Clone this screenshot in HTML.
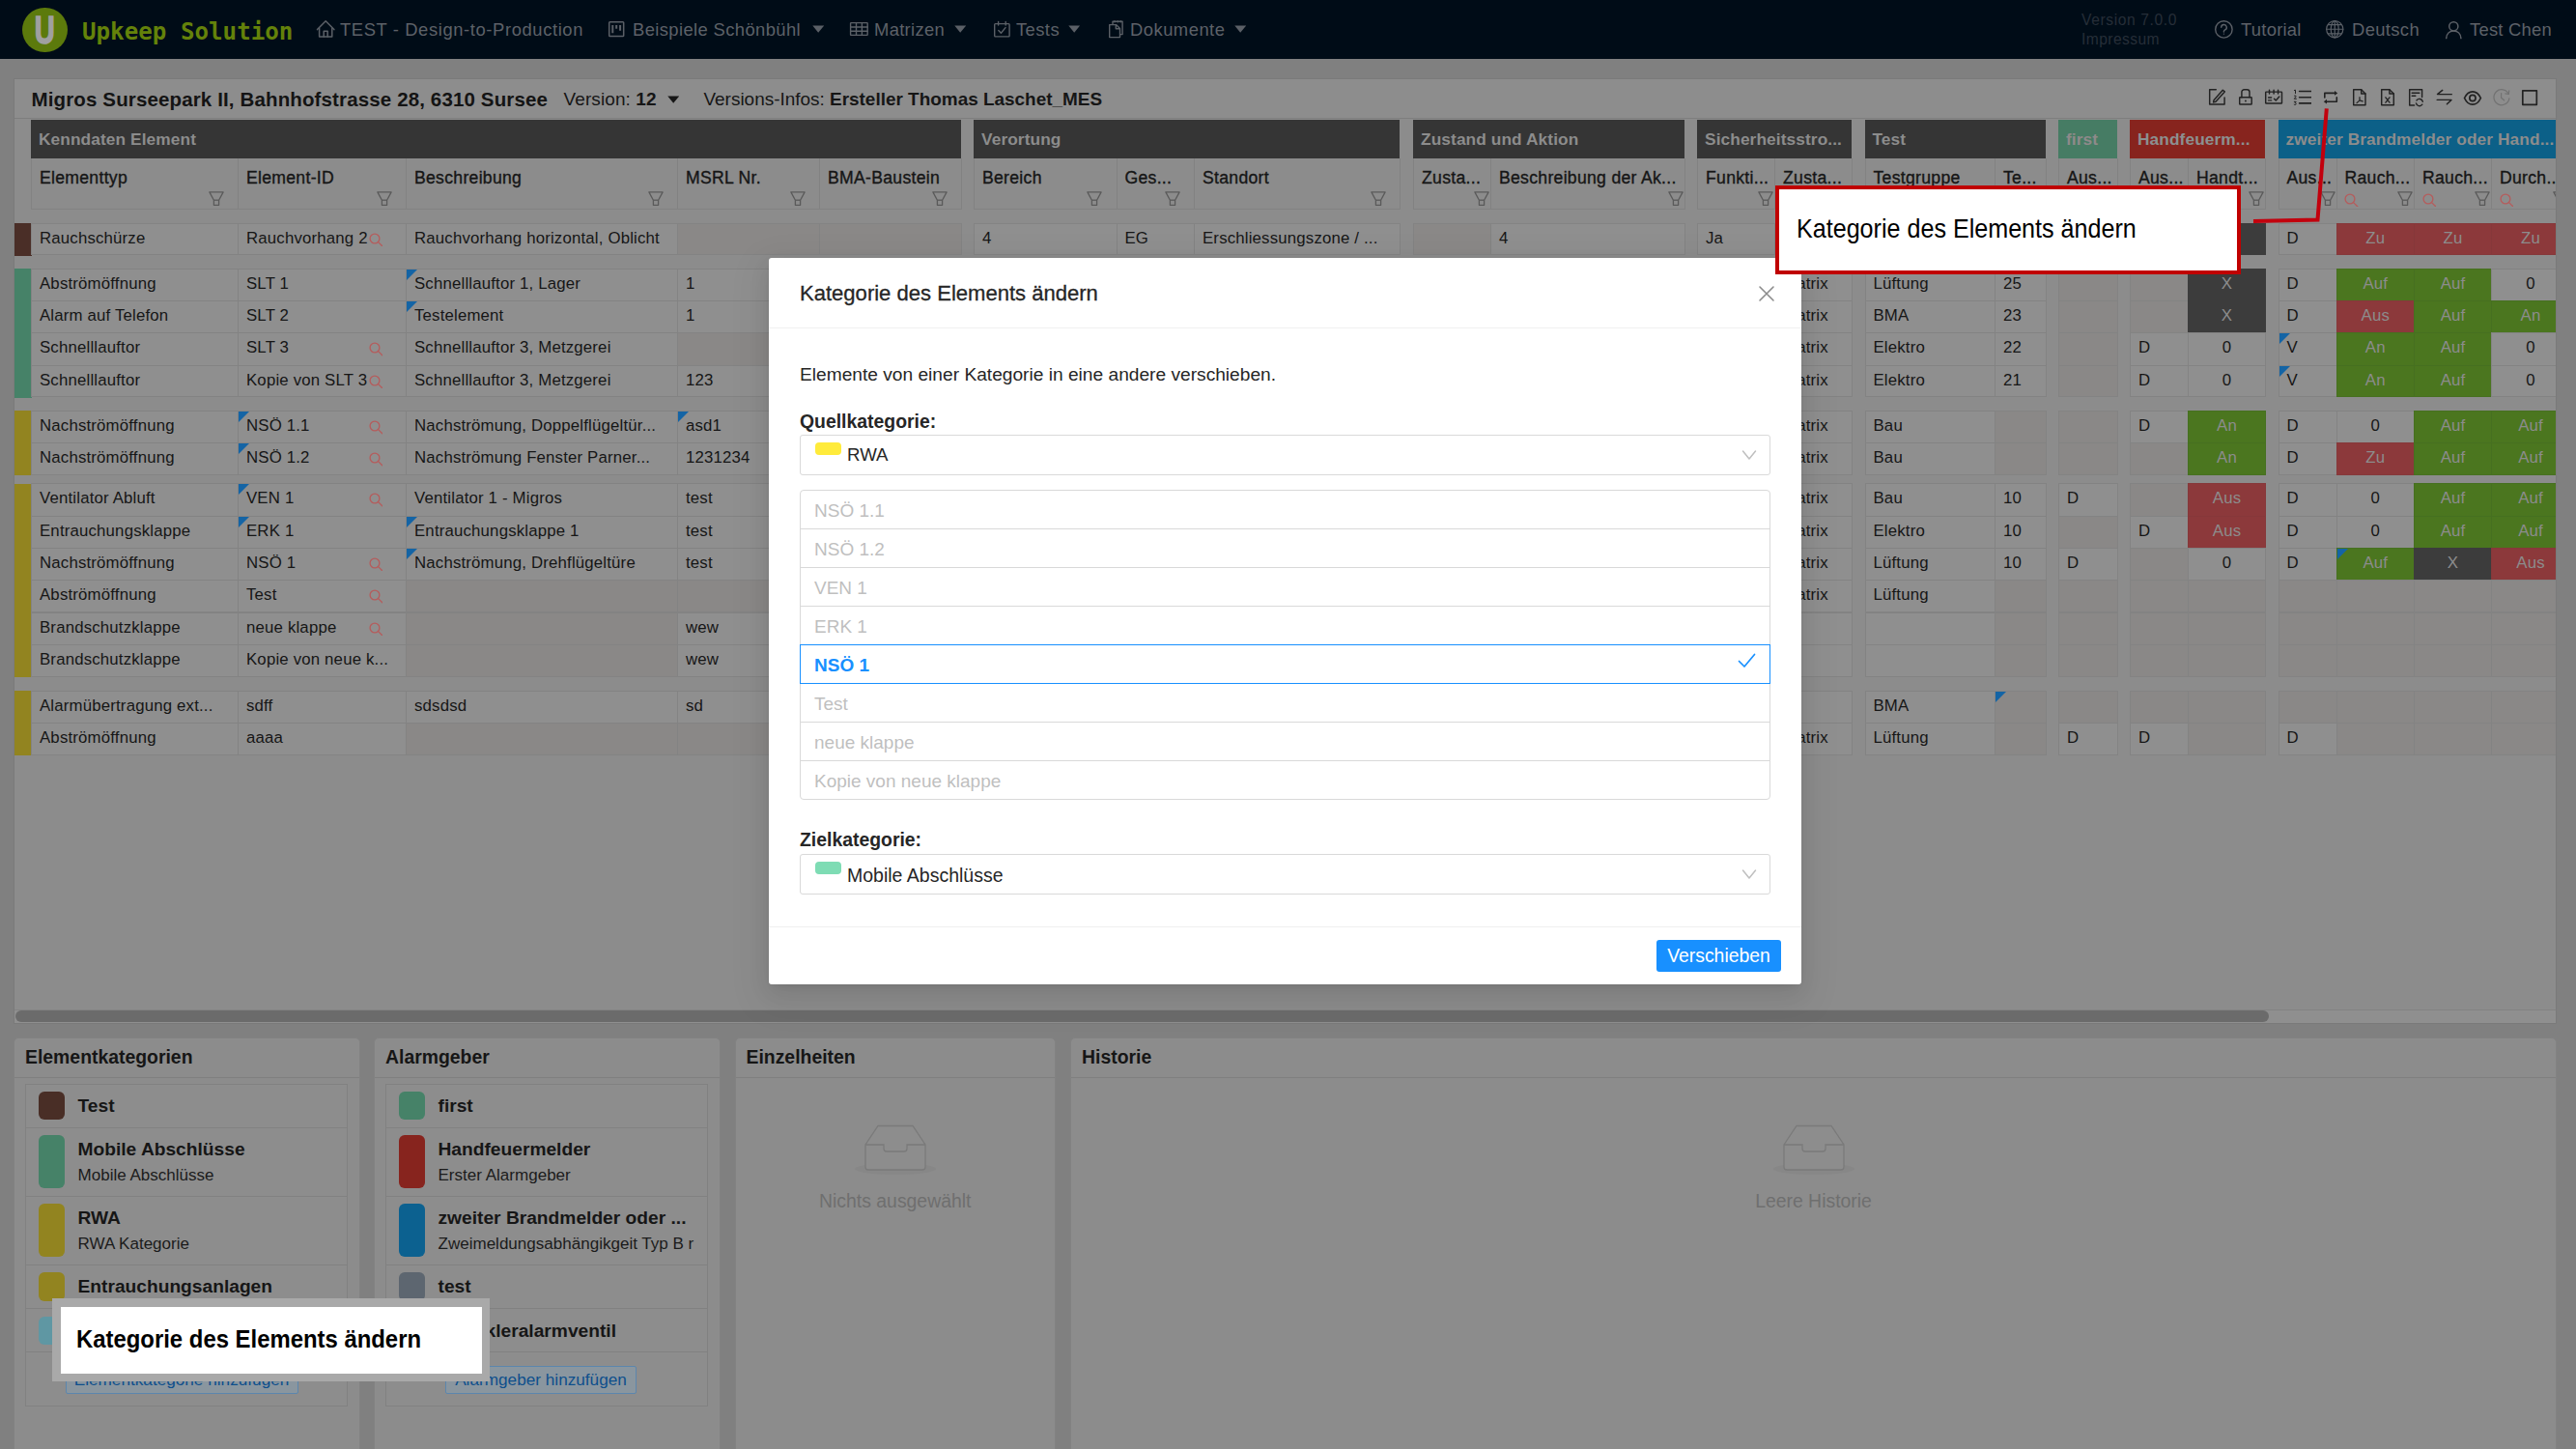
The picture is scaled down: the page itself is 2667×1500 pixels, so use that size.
<!DOCTYPE html><html lang="de"><head><meta charset="utf-8"><title>Upkeep Solution</title><style>
*{box-sizing:border-box;margin:0;padding:0}
html,body{width:2667px;height:1500px;overflow:hidden;background:#808080}
body{position:relative;font-family:"Liberation Sans",sans-serif;font-size:18.67px;color:#161616}
.abs,.c,.h,.gh,.t{position:absolute}
#nav{position:absolute;left:0;top:0;width:2667px;height:61px;background:#000c17}
.nt{position:absolute;top:-0.5px;height:61px;line-height:61px;color:#5d6168;white-space:nowrap;font-size:18.67px}
#card{position:absolute;left:14px;top:81px;width:2633px;height:979px;background:#8c8c8c;border:1px solid #7a7a7a;overflow:hidden}
.gh{top:42px;height:40px;line-height:41.4px;font-weight:bold;font-size:17.3px;letter-spacing:.1px;padding-left:8px;white-space:nowrap;overflow:hidden}
.h{top:82px;height:52.5px;border:1px solid #828282;border-top:none;background:#8c8c8c;padding:7.9px 0 0 8px;white-space:nowrap;overflow:hidden;line-height:24px;font-size:17.6px;letter-spacing:.3px;-webkit-text-stroke:0.35px #161616}
.c{height:34.3px;border:1px solid #838383;background:#8f8f8f;line-height:29.4px;font-size:16.8px;letter-spacing:.18px;padding-left:8px;white-space:nowrap;overflow:hidden}
.c.e{background:#8a8887}
.c.g{background:#4b761f;color:#8c8c8c;text-align:center;padding:0;border-color:#467020}
.c.r{background:#8c393b;color:#8c8c8c;text-align:center;padding:0;border-color:#86383a}
.c.k{background:#3c3c3c;color:#8c8c8c;text-align:center;padding:0;border-color:#3c3c3c}
.c.cc{text-align:center;padding:0}
.bar{position:absolute;left:0;width:17.5px}
.tri{position:absolute;left:0;top:0;width:0;height:0;border-top:11px solid #1464a5;border-right:11px solid transparent}
.sr{position:absolute;width:15px;height:15px}
.fl{position:absolute;width:15px;height:15px}
.panel{position:absolute;top:1073.5px;height:440px;background:#8c8c8c;border:1px solid #828282;border-radius:5px}
.ph{position:absolute;left:0;right:0;top:0;height:41.5px;border-bottom:1px solid #7f7f7f;font-weight:bold;font-size:19.4px;line-height:39.5px;padding-left:11px}
.li{position:absolute;left:10.5px;width:334px;border:1px solid #818181;background:#8d8d8d}
.sw{position:absolute;left:13px;width:27.5px;border-radius:6px}
.lt{position:absolute;left:54px;font-weight:bold;font-size:19.2px;white-space:nowrap;line-height:24px}
.ls{position:absolute;left:54px;font-size:17.05px;white-space:nowrap;line-height:20px;color:#1b1b1b}
.btn{position:absolute;height:29px;border:1px solid #5c86ad;background:#8a969f;color:#0e4f8c;border-radius:2px;font-size:17.2px;line-height:26px;text-align:center;white-space:nowrap}
#modal{position:absolute;left:796px;top:267px;width:1069px;height:752px;background:#fff;border-radius:3px;box-shadow:0 4px 8px -5px rgba(0,0,0,.12),0 8px 21px 0 rgba(0,0,0,.08),0 12px 37px 11px rgba(0,0,0,.05);color:#262626}
.sel{position:absolute;left:32px;width:1005px;height:42px;border:1px solid #d9d9d9;border-radius:3px;background:#fff}
.opt{position:absolute;left:0;width:1005px;height:41px;border:1px solid #d9d9d9;color:#bfbfbf;line-height:41.5px;font-size:19px;padding-left:14px;background:#fff}
</style></head><body>
<div id="nav">
<div class="abs" style="left:23px;top:7.5px;width:46.5px;height:46.5px;border-radius:50%;background:#5c7a0c"></div>
<div class="abs" style="left:23px;top:7.5px;width:46.5px;height:46.5px;color:#a0a0a0;-webkit-text-stroke:1.6px #a0a0a0;font-weight:bold;font-size:41.5px;line-height:45.5px;text-align:center;transform:scaleX(0.70)">U</div>
<div class="abs" style="left:85px;top:2.5px;height:61px;line-height:61px;font-family:'DejaVu Sans Mono','Liberation Mono',monospace;font-weight:bold;font-size:24.2px;color:#64820a;white-space:nowrap">Upkeep Solution</div>
<svg class="abs" style="left:326.7px;top:20.2px" width="20.4" height="19.7" viewBox="-1 -1 20.4 19.7" fill="none" stroke="#5b6067" stroke-width="1.5" stroke-linecap="round" stroke-linejoin="round"><path d="M0.500 9.600 9.200 0.700 17.900 9.600"/><path d="M2.600 8.200V17H15.800V8.200"/><path d="M7.200 17V11.200H11.200V17"/></svg>
<div class="nt" style="left:352px;font-size:18.4px;letter-spacing:0.601px;">TEST - Design-to-Production</div>
<svg class="abs" style="left:628.5px;top:21.2px" width="18.4" height="18.2" viewBox="-1 -1 18.4 18.2" fill="none" stroke="#5b6067" stroke-width="1.5" stroke-linecap="round" stroke-linejoin="round"><rect x="0.700" y="0.700" width="15" height="14.800" rx="0.800"/><path d="M4.300 4v8.200M8.200 4v3.800M12.100 4v5.800" stroke-width="2" stroke-linecap="butt"/></svg>
<div class="nt" style="left:655px;font-size:18.4px;letter-spacing:0.387px;">Beispiele Schönbühl</div>
<svg class="abs" style="left:840.5px;top:26.2px" width="12.4" height="8" viewBox="0 0 12.4 8"><path d="M0.3 0.6h11.800L6.200 7.800z" fill="#5b6067"/></svg>
<svg class="abs" style="left:878.6px;top:22.3px" width="20.8" height="16.0" viewBox="-1 -1 20.8 16.0" fill="none" stroke="#5b6067" stroke-width="1.4" stroke-linecap="round" stroke-linejoin="round"><rect x="0.600" y="0.600" width="17.600" height="12.800" rx="0.600"/><path d="M0.600 5h17.600M0.600 9.300h17.600M6.500 0.600v12.800M12.400 0.600v12.800"/></svg>
<div class="nt" style="left:905px;font-size:18.4px;letter-spacing:0.309px;">Matrizen</div>
<svg class="abs" style="left:988px;top:26.2px" width="12.4" height="8" viewBox="0 0 12.4 8"><path d="M0.3 0.6h11.800L6.200 7.800z" fill="#5b6067"/></svg>
<svg class="abs" style="left:1028.0px;top:20.6px" width="18.8" height="18.6" viewBox="-1 -1 18.8 18.6" fill="none" stroke="#5b6067" stroke-width="1.4" stroke-linecap="round" stroke-linejoin="round"><rect x="0.700" y="2.600" width="15.400" height="13.300" rx="0.800"/><path d="M4.600 0.500v3.600M12.200 0.500v3.600M4.800 9.600l2.600 2.600 4.600-5.600"/></svg>
<div class="nt" style="left:1052px;font-size:18.4px;letter-spacing:0.412px;">Tests</div>
<svg class="abs" style="left:1106.3px;top:26.2px" width="12.4" height="8" viewBox="0 0 12.4 8"><path d="M0.3 0.6h11.800L6.200 7.800z" fill="#5b6067"/></svg>
<svg class="abs" style="left:1146.8px;top:20.1px" width="16.8" height="20.3" viewBox="-1 -1 16.8 20.3" fill="none" stroke="#5b6067" stroke-width="1.4" stroke-linecap="round" stroke-linejoin="round"><path d="M4 3.400V1.300h10.100V14.600H11.600"/><path d="M6 0.400v1.800M9.200 0.400v1.800M12.200 0.400v1.800" stroke-width="1"/><path d="M0.700 4.600h6.800l4 4v9H0.700z"/><path d="M7.300 4.800v4h4"/></svg>
<div class="nt" style="left:1170px;font-size:18.4px;letter-spacing:0.484px;">Dokumente</div>
<svg class="abs" style="left:1277.5px;top:26.2px" width="12.4" height="8" viewBox="0 0 12.4 8"><path d="M0.3 0.6h11.800L6.200 7.800z" fill="#5b6067"/></svg>
<div class="abs" style="left:2155px;top:11px;font-size:15.6px;letter-spacing:0.613px;line-height:20px;color:#262e38;white-space:nowrap">Version 7.0.0</div>
<div class="abs" style="left:2155px;top:31px;font-size:15.6px;letter-spacing:0.431px;line-height:20px;color:#262e38;white-space:nowrap">Impressum</div>
<svg class="abs" style="left:2292.0px;top:20.2px" width="20.8" height="20.8" viewBox="-1 -1 20.8 20.8" fill="none" stroke="#5b6067" stroke-width="1.4" stroke-linecap="round" stroke-linejoin="round"><circle cx="9.400" cy="9.400" r="8.700"/><path d="M6.700 7.300a2.800 2.800 0 1 1 3.900 2.600c-.8.400-1.200.9-1.200 1.700v.4"/><circle cx="9.400" cy="14.100" r=".7" fill="#5f646b" stroke="none"/></svg>
<div class="nt" style="left:2320px;font-size:18.4px;letter-spacing:0.257px;">Tutorial</div>
<svg class="abs" style="left:2406.9px;top:20.3px" width="20.5" height="20.5" viewBox="-1 -1 20.5 20.5" fill="none" stroke="#5b6067" stroke-width="1.2" stroke-linecap="round" stroke-linejoin="round"><circle cx="9.250" cy="9.250" r="8.600"/><ellipse cx="9.250" cy="9.250" rx="4" ry="8.600"/><path d="M0.700 9.250h17.100M2.300 4.600h13.900M2.300 13.900h13.900M9.250 0.700v17.100"/></svg>
<div class="nt" style="left:2435px;font-size:18.4px;letter-spacing:0.362px;">Deutsch</div>
<svg class="abs" style="left:2531.0px;top:20.5px" width="18.6" height="20.0" viewBox="-1 -1 18.6 20.0" fill="none" stroke="#5b6067" stroke-width="1.5" stroke-linecap="round" stroke-linejoin="round"><circle cx="8.300" cy="5.300" r="4.600"/><path d="M0.700 17.600c.3-4.600 3.400-7.600 7.600-7.600s7.300 3 7.600 7.600"/></svg>
<div class="nt" style="left:2557px;font-size:18.4px;letter-spacing:0.243px;">Test Chen</div>
</div>
<div id="card">
<div class="abs" style="left:0;top:0;width:2633px;height:41px;border-bottom:1px solid #7e7e7e;background:#8d8d8d"></div>
<div class="abs" style="left:17.5px;top:5.799999999999997px;font-weight:bold;font-size:20.5px;letter-spacing:0.134px;line-height:30px;white-space:nowrap;color:#141414" id="ttl">Migros Surseepark II, Bahnhofstrasse 28, 6310 Sursee</div>
<div class="abs" style="left:568.5px;top:6.400000000000006px;line-height:30px;white-space:nowrap;font-size:19px;letter-spacing:.1px" id="ver">Version: <b>12</b></div>
<svg class="abs" style="left:675.5px;top:16.5px" width="12.4" height="8" viewBox="0 0 12.4 8"><path d="M0.3 0.6h11.800L6.200 7.800z" fill="#161616"/></svg>
<div class="abs" style="left:713.5px;top:6.400000000000006px;line-height:30px;white-space:nowrap;font-size:18.95px" id="vinfo">Versions-Infos: <b>Ersteller Thomas Laschet_MES</b></div>
<svg class="abs" style="left:2271.3px;top:9.3px" width="18.8" height="18.8" viewBox="-1 -1 18.8 18.8" fill="none" stroke="#222222" stroke-width="1.45" stroke-linecap="round" stroke-linejoin="round"><path d="M7.300 0.700H0.700V16.100H16.100V9.100"/><path d="M5 11.800 14.300 1.200 16.300 2.900 7 13.300 4.600 13.900Z"/></svg>
<svg class="abs" style="left:2302.1px;top:9.3px" width="15.9" height="18.8" viewBox="-1 -1 15.9 18.8" fill="none" stroke="#222222" stroke-width="1.45" stroke-linecap="round" stroke-linejoin="round"><rect x="0.700" y="8.700" width="12.500" height="7.400" rx="0.600"/><path d="M2.900 8.700V3.400a2.600 2.600 0 0 1 2.600-2.600h2.900a2.600 2.600 0 0 1 2.600 2.600V8.700"/><circle cx="6.950" cy="12.500" r="0.900" fill="#222" stroke="none"/></svg>
<svg class="abs" style="left:2329.3px;top:10.4px" width="20.2" height="16.6" viewBox="-1 -1 20.2 16.6" fill="none" stroke="#222222" stroke-width="1.45" stroke-linecap="round" stroke-linejoin="round"><rect x="0.700" y="2.100" width="16.800" height="11.900" rx="0.600"/><path d="M4.500 0.200v3.800M9.100 0.200v3.800M13.600 0.200v3.800M3.600 8.100h3M3.600 10.900h3M9.500 9.200l1.800 1.900 3.500-4"/></svg>
<svg class="abs" style="left:2358.7px;top:10.4px" width="19.8" height="17.4" viewBox="-1 -1 19.8 17.4" fill="none" stroke="#222222" stroke-width="1.45" stroke-linecap="round" stroke-linejoin="round"><path d="M5.600 1.500h12.200M5.600 7.700h12.200M5.600 13.900h12.200" stroke-width="1.600"/><path d="M0.400 0.500 1.500 0.200V3.600M0.300 6.300c0.800-0.700 2.100-0.300 1.800 0.700L0.300 9.300H2.400M0.300 12.300H2.200L1.100 13.600c1.300-0.100 1.500 1.600 0.400 1.900-0.500 0.100-0.900 0-1.300-0.300" stroke-width="1"/></svg>
<svg class="abs" style="left:2390.1px;top:11.1px" width="16.0" height="15.6" viewBox="-1 -1 16.0 15.6" fill="none" stroke="#222222" stroke-width="1.6" stroke-linecap="round" stroke-linejoin="round"><path d="M0.800 6.900V2.400H11.600"/><path d="M11 0V4.800L14.200 2.400Z" fill="#222" stroke="none"/><path d="M13.300 6.900V11.200H2.500"/><path d="M3 8.800V13.600L-0.200 11.200Z" fill="#222" stroke="none"/></svg>
<svg class="abs" style="left:2419.8px;top:9.0px" width="15.7" height="19.5" viewBox="-1 -1 15.7 19.5" fill="none" stroke="#222222" stroke-width="1.45" stroke-linecap="round" stroke-linejoin="round"><path d="M0.700 0.700H8.700L13 5V16.800H0.700Z"/><path d="M8.700 0.700V5H13" /><path d="M7 11.900V8.600M7 11.900 4 14.600M7 11.900 10.200 12.900" stroke-width="1.200"/></svg>
<svg class="abs" style="left:2449.1px;top:9.0px" width="16.0" height="19.5" viewBox="-1 -1 16.0 19.5" fill="none" stroke="#222222" stroke-width="1.45" stroke-linecap="round" stroke-linejoin="round"><path d="M0.700 0.700H8.900L13.300 5V16.800H0.700Z"/><path d="M8.900 0.700V5H13.300"/><path d="M4.900 8.800 9 14.200M9 8.800 4.900 14.200" stroke-width="1.300"/></svg>
<svg class="abs" style="left:2478.1px;top:9.0px" width="17.1" height="19.8" viewBox="-1 -1 17.1 19.8" fill="none" stroke="#222222" stroke-width="1.45" stroke-linecap="round" stroke-linejoin="round"><path d="M5.600 17.100H0.700V0.700H13.600V8.600"/><path d="M3.200 4.200H10.800M3.200 7.300H6.800"/><path d="M14.300 13.200a3.500 3.500 0 0 0-6.300-1.300M7.500 14.900a3.500 3.500 0 0 0 6.300 1.300" /></svg>
<svg class="abs" style="left:2507.1px;top:10.4px" width="17.4" height="17.0" viewBox="-1 -1 17.4 17.0" fill="none" stroke="#222222" stroke-width="1.45" stroke-linecap="round" stroke-linejoin="round"><path d="M15.300 4.600H0.500L5.700 0.400"/><path d="M0.200 10.400H15L10.400 14.700"/></svg>
<svg class="abs" style="left:2535.4px;top:11.1px" width="19.9" height="17.0" viewBox="-1 -1 19.9 17.0" fill="none" stroke="#222222" stroke-width="1.7" stroke-linecap="round" stroke-linejoin="round"><path d="M0.500 7.500C2.500 3.200 5.600 0.800 8.950 0.800S15.400 3.200 17.400 7.500C15.400 11.800 12.300 14.200 8.950 14.200S2.500 11.800 0.500 7.500Z"/><circle cx="8.950" cy="7.500" r="3.100"/></svg>
<svg class="abs" style="left:2565.1px;top:9.0px" width="19.2" height="19.5" viewBox="-1 -1 19.2 19.5" fill="none" stroke="#727272" stroke-width="1.2" stroke-linecap="round" stroke-linejoin="round"><path d="M16.200 5.300A8 8 0 1 0 16.900 9.800"/><path d="M8.600 4.600V9.200L11.600 11.800M16.700 1.800 16.400 5.500 12.900 4.800" /></svg>
<svg class="abs" style="left:2595.2px;top:10.0px" width="18.1" height="18.1" viewBox="-1 -1 18.1 18.1" fill="none" stroke="#222222" stroke-width="1.7" stroke-linecap="round" stroke-linejoin="round"><rect x="0.800" y="0.800" width="14.500" height="14.500"/></svg>
<div class="gh" style="left:17.0px;width:963.0px;background:#353535;color:#8c8c8c">Kenndaten Element</div>
<div class="h" style="left:17.0px;width:215.0px">Elementtyp</div>
<svg class="abs" style="left:200.5px;top:116.19999999999999px" width="16" height="15" viewBox="0 0 16 15" fill="none" stroke="#5a5a5a" stroke-width="1.3" stroke-linejoin="round"><path d="M0.900 0.900H15.100L10.600 9.200V14.300H5.400V9.200Z"/><path d="M5.400 9.200H10.600"/></svg>
<div class="h" style="left:231.0px;width:175.0px">Element-ID</div>
<svg class="abs" style="left:374.5px;top:116.19999999999999px" width="16" height="15" viewBox="0 0 16 15" fill="none" stroke="#5a5a5a" stroke-width="1.3" stroke-linejoin="round"><path d="M0.900 0.900H15.100L10.600 9.200V14.300H5.400V9.200Z"/><path d="M5.400 9.200H10.600"/></svg>
<div class="h" style="left:405.0px;width:282.0px">Beschreibung</div>
<svg class="abs" style="left:655.5px;top:116.19999999999999px" width="16" height="15" viewBox="0 0 16 15" fill="none" stroke="#5a5a5a" stroke-width="1.3" stroke-linejoin="round"><path d="M0.900 0.900H15.100L10.600 9.200V14.300H5.400V9.200Z"/><path d="M5.400 9.200H10.600"/></svg>
<div class="h" style="left:686.0px;width:148.0px">MSRL Nr.</div>
<svg class="abs" style="left:802.5px;top:116.19999999999999px" width="16" height="15" viewBox="0 0 16 15" fill="none" stroke="#5a5a5a" stroke-width="1.3" stroke-linejoin="round"><path d="M0.900 0.900H15.100L10.600 9.200V14.300H5.400V9.200Z"/><path d="M5.400 9.200H10.600"/></svg>
<div class="h" style="left:833.0px;width:148.0px">BMA-Baustein</div>
<svg class="abs" style="left:949.5px;top:116.19999999999999px" width="16" height="15" viewBox="0 0 16 15" fill="none" stroke="#5a5a5a" stroke-width="1.3" stroke-linejoin="round"><path d="M0.900 0.900H15.100L10.600 9.200V14.300H5.400V9.200Z"/><path d="M5.400 9.200H10.600"/></svg>
<div class="gh" style="left:993.0px;width:441.0px;background:#353535;color:#8c8c8c">Verortung</div>
<div class="h" style="left:993.0px;width:148.5px">Bereich</div>
<svg class="abs" style="left:1110.0px;top:116.19999999999999px" width="16" height="15" viewBox="0 0 16 15" fill="none" stroke="#5a5a5a" stroke-width="1.3" stroke-linejoin="round"><path d="M0.900 0.900H15.100L10.600 9.200V14.300H5.400V9.200Z"/><path d="M5.400 9.200H10.600"/></svg>
<div class="h" style="left:1140.5px;width:81.5px">Ges...</div>
<svg class="abs" style="left:1190.5px;top:116.19999999999999px" width="16" height="15" viewBox="0 0 16 15" fill="none" stroke="#5a5a5a" stroke-width="1.3" stroke-linejoin="round"><path d="M0.900 0.900H15.100L10.600 9.200V14.300H5.400V9.200Z"/><path d="M5.400 9.200H10.600"/></svg>
<div class="h" style="left:1221.0px;width:214.0px">Standort</div>
<svg class="abs" style="left:1403.5px;top:116.19999999999999px" width="16" height="15" viewBox="0 0 16 15" fill="none" stroke="#5a5a5a" stroke-width="1.3" stroke-linejoin="round"><path d="M0.900 0.900H15.100L10.600 9.200V14.300H5.400V9.200Z"/><path d="M5.400 9.200H10.600"/></svg>
<div class="gh" style="left:1448.0px;width:281.0px;background:#353535;color:#8c8c8c">Zustand und Aktion</div>
<div class="h" style="left:1448.0px;width:81.0px">Zusta...</div>
<svg class="abs" style="left:1511px;top:116.19999999999999px" width="16" height="15" viewBox="0 0 16 15" fill="none" stroke="#5a5a5a" stroke-width="1.3" stroke-linejoin="round"><path d="M0.900 0.900H15.100L10.600 9.200V14.300H5.400V9.200Z"/><path d="M5.400 9.200H10.600"/></svg>
<div class="h" style="left:1528.0px;width:202.0px">Beschreibung der Ak...</div>
<svg class="abs" style="left:1712px;top:116.19999999999999px" width="16" height="15" viewBox="0 0 16 15" fill="none" stroke="#5a5a5a" stroke-width="1.3" stroke-linejoin="round"><path d="M0.900 0.900H15.100L10.600 9.200V14.300H5.400V9.200Z"/><path d="M5.400 9.200H10.600"/></svg>
<div class="gh" style="left:1742.0px;width:160.0px;background:#353535;color:#8c8c8c">Sicherheitsstro...</div>
<div class="h" style="left:1742.0px;width:81.0px">Funkti...</div>
<svg class="abs" style="left:1805px;top:116.19999999999999px" width="16" height="15" viewBox="0 0 16 15" fill="none" stroke="#5a5a5a" stroke-width="1.3" stroke-linejoin="round"><path d="M0.900 0.900H15.100L10.600 9.200V14.300H5.400V9.200Z"/><path d="M5.400 9.200H10.600"/></svg>
<div class="h" style="left:1822.0px;width:81.0px">Zusta...</div>
<svg class="abs" style="left:1885px;top:116.19999999999999px" width="16" height="15" viewBox="0 0 16 15" fill="none" stroke="#5a5a5a" stroke-width="1.3" stroke-linejoin="round"><path d="M0.900 0.900H15.100L10.600 9.200V14.300H5.400V9.200Z"/><path d="M5.400 9.200H10.600"/></svg>
<div class="gh" style="left:1915.5px;width:187.5px;background:#353535;color:#8c8c8c">Test</div>
<div class="h" style="left:1915.5px;width:135.5px">Testgruppe</div>
<div class="h" style="left:2050.0px;width:54.0px">Te...</div>
<div class="gh" style="left:2116.0px;width:61.0px;background:#467c64;color:#8e8a8a">first</div>
<div class="h" style="left:2116.0px;width:62.0px">Aus...</div>
<div class="gh" style="left:2190.0px;width:140.0px;background:#87241e;color:#8c9090">Handfeuerm...</div>
<div class="h" style="left:2190.0px;width:61.0px">Aus...</div>
<div class="h" style="left:2250.0px;width:81.0px">Handt...</div>
<svg class="abs" style="left:2313px;top:116.19999999999999px" width="16" height="15" viewBox="0 0 16 15" fill="none" stroke="#5a5a5a" stroke-width="1.3" stroke-linejoin="round"><path d="M0.900 0.900H15.100L10.600 9.200V14.300H5.400V9.200Z"/><path d="M5.400 9.200H10.600"/></svg>
<div class="gh" style="left:2343.5px;width:301.5px;background:#0c6088;color:#8c8c8c">zweiter Brandmelder oder Hand...</div>
<div class="h" style="left:2343.5px;width:61.0px">Aus...</div>
<svg class="abs" style="left:2386.5px;top:116.19999999999999px" width="16" height="15" viewBox="0 0 16 15" fill="none" stroke="#5a5a5a" stroke-width="1.3" stroke-linejoin="round"><path d="M0.900 0.900H15.100L10.600 9.200V14.300H5.400V9.200Z"/><path d="M5.400 9.200H10.600"/></svg>
<div class="h" style="left:2403.5px;width:81.5px">Rauch...</div>
<svg class="abs" style="left:2467px;top:116.19999999999999px" width="16" height="15" viewBox="0 0 16 15" fill="none" stroke="#5a5a5a" stroke-width="1.3" stroke-linejoin="round"><path d="M0.900 0.900H15.100L10.600 9.200V14.300H5.400V9.200Z"/><path d="M5.400 9.200H10.600"/></svg>
<svg class="abs" style="left:2412.0px;top:117.5px" width="14.500" height="14.500" viewBox="0 0 16 16" fill="none" stroke="#b55c5c" stroke-width="1.500" stroke-linecap="round"><circle cx="6.600" cy="6.600" r="5.400"/><path d="M10.600 10.600 15.200 15.200"/></svg>
<div class="h" style="left:2484.0px;width:81.0px">Rauch...</div>
<svg class="abs" style="left:2547px;top:116.19999999999999px" width="16" height="15" viewBox="0 0 16 15" fill="none" stroke="#5a5a5a" stroke-width="1.3" stroke-linejoin="round"><path d="M0.900 0.900H15.100L10.600 9.200V14.300H5.400V9.200Z"/><path d="M5.400 9.200H10.600"/></svg>
<svg class="abs" style="left:2492.5px;top:117.5px" width="14.500" height="14.500" viewBox="0 0 16 16" fill="none" stroke="#b55c5c" stroke-width="1.500" stroke-linecap="round"><circle cx="6.600" cy="6.600" r="5.400"/><path d="M10.600 10.600 15.200 15.200"/></svg>
<div class="h" style="left:2564.0px;width:82.0px">Durch...</div>
<svg class="abs" style="left:2628px;top:116.19999999999999px" width="16" height="15" viewBox="0 0 16 15" fill="none" stroke="#5a5a5a" stroke-width="1.3" stroke-linejoin="round"><path d="M0.900 0.900H15.100L10.600 9.200V14.300H5.400V9.200Z"/><path d="M5.400 9.200H10.600"/></svg>
<svg class="abs" style="left:2572.5px;top:117.5px" width="14.500" height="14.500" viewBox="0 0 16 16" fill="none" stroke="#b55c5c" stroke-width="1.500" stroke-linecap="round"><circle cx="6.600" cy="6.600" r="5.400"/><path d="M10.600 10.600 15.200 15.200"/></svg>
<div class="bar" style="top:148.8px;height:33.9px;background:#4a2e27"></div>
<div class="c" style="left:17.0px;top:148.6px;width:215.0px;height:33.8px">Rauchschürze</div>
<div class="c" style="left:231.0px;top:148.6px;width:175.0px;height:33.8px">Rauchvorhang 2</div>
<svg class="abs" style="left:366.5px;top:158.6px" width="14.500" height="14.500" viewBox="0 0 16 16" fill="none" stroke="#b55c5c" stroke-width="1.500" stroke-linecap="round"><circle cx="6.600" cy="6.600" r="5.400"/><path d="M10.600 10.600 15.200 15.200"/></svg>
<div class="c" style="left:405.0px;top:148.6px;width:282.0px;height:33.8px">Rauchvorhang horizontal, Oblicht</div>
<div class="c e" style="left:686.0px;top:148.6px;width:148.0px;height:33.8px"></div>
<div class="c e" style="left:833.0px;top:148.6px;width:148.0px;height:33.8px"></div>
<div class="c" style="left:993.0px;top:148.6px;width:148.5px;height:33.8px">4</div>
<div class="c" style="left:1140.5px;top:148.6px;width:81.5px;height:33.8px">EG</div>
<div class="c" style="left:1221.0px;top:148.6px;width:214.0px;height:33.8px">Erschliessungszone / ...</div>
<div class="c e" style="left:1448.0px;top:148.6px;width:81.0px;height:33.8px"></div>
<div class="c" style="left:1528.0px;top:148.6px;width:202.0px;height:33.8px">4</div>
<div class="c" style="left:1742.0px;top:148.6px;width:81.0px;height:33.8px">Ja</div>
<div class="c" style="left:1822.0px;top:148.6px;width:81.0px;height:33.8px">Matrix</div>
<div class="c" style="left:1915.5px;top:148.6px;width:135.5px;height:33.8px">Bau</div>
<div class="c e" style="left:2050.0px;top:148.6px;width:54.0px;height:33.8px"></div>
<div class="c e" style="left:2116.0px;top:148.6px;width:62.0px;height:33.8px"></div>
<div class="c e" style="left:2190.0px;top:148.6px;width:61.0px;height:33.8px"></div>
<div class="c k" style="left:2250.0px;top:148.6px;width:81.0px;height:33.8px"></div>
<div class="c" style="left:2343.5px;top:148.6px;width:61.0px;height:33.8px">D</div>
<div class="c r" style="left:2403.5px;top:148.6px;width:81.5px;height:33.8px">Zu</div>
<div class="c r" style="left:2484.0px;top:148.6px;width:81.0px;height:33.8px">Zu</div>
<div class="c r" style="left:2564.0px;top:148.6px;width:82.0px;height:33.8px">Zu</div>
<div class="bar" style="top:196.0px;height:133.8px;background:#468268"></div>
<div class="c" style="left:17.0px;top:195.8px;width:215.0px">Abströmöffnung</div>
<div class="c" style="left:231.0px;top:195.8px;width:175.0px">SLT 1</div>
<div class="c" style="left:405.0px;top:195.8px;width:282.0px"><i class="tri"></i>Schnelllauftor 1, Lager</div>
<div class="c" style="left:686.0px;top:195.8px;width:148.0px">1</div>
<div class="c e" style="left:833.0px;top:195.8px;width:148.0px"></div>
<div class="c" style="left:993.0px;top:195.8px;width:148.5px">1</div>
<div class="c" style="left:1140.5px;top:195.8px;width:81.5px">EG</div>
<div class="c" style="left:1221.0px;top:195.8px;width:214.0px">Lager</div>
<div class="c e" style="left:1448.0px;top:195.8px;width:81.0px"></div>
<div class="c e" style="left:1528.0px;top:195.8px;width:202.0px"></div>
<div class="c" style="left:1742.0px;top:195.8px;width:81.0px">Ja</div>
<div class="c" style="left:1822.0px;top:195.8px;width:81.0px">Matrix</div>
<div class="c" style="left:1915.5px;top:195.8px;width:135.5px">Lüftung</div>
<div class="c" style="left:2050.0px;top:195.8px;width:54.0px">25</div>
<div class="c e" style="left:2116.0px;top:195.8px;width:62.0px"></div>
<div class="c e" style="left:2190.0px;top:195.8px;width:61.0px"></div>
<div class="c k" style="left:2250.0px;top:195.8px;width:81.0px">X</div>
<div class="c" style="left:2343.5px;top:195.8px;width:61.0px">D</div>
<div class="c g" style="left:2403.5px;top:195.8px;width:81.5px">Auf</div>
<div class="c g" style="left:2484.0px;top:195.8px;width:81.0px">Auf</div>
<div class="c cc" style="left:2564.0px;top:195.8px;width:82.0px">0</div>
<div class="c" style="left:17.0px;top:229.1px;width:215.0px">Alarm auf Telefon</div>
<div class="c" style="left:231.0px;top:229.1px;width:175.0px">SLT 2</div>
<div class="c" style="left:405.0px;top:229.1px;width:282.0px"><i class="tri"></i>Testelement</div>
<div class="c" style="left:686.0px;top:229.1px;width:148.0px">1</div>
<div class="c e" style="left:833.0px;top:229.1px;width:148.0px"></div>
<div class="c" style="left:993.0px;top:229.1px;width:148.5px">1</div>
<div class="c" style="left:1140.5px;top:229.1px;width:81.5px">EG</div>
<div class="c" style="left:1221.0px;top:229.1px;width:214.0px">Lager</div>
<div class="c e" style="left:1448.0px;top:229.1px;width:81.0px"></div>
<div class="c e" style="left:1528.0px;top:229.1px;width:202.0px"></div>
<div class="c" style="left:1742.0px;top:229.1px;width:81.0px">Ja</div>
<div class="c" style="left:1822.0px;top:229.1px;width:81.0px">Matrix</div>
<div class="c" style="left:1915.5px;top:229.1px;width:135.5px">BMA</div>
<div class="c" style="left:2050.0px;top:229.1px;width:54.0px">23</div>
<div class="c e" style="left:2116.0px;top:229.1px;width:62.0px"></div>
<div class="c e" style="left:2190.0px;top:229.1px;width:61.0px"></div>
<div class="c k" style="left:2250.0px;top:229.1px;width:81.0px">X</div>
<div class="c" style="left:2343.5px;top:229.1px;width:61.0px">D</div>
<div class="c r" style="left:2403.5px;top:229.1px;width:81.5px">Aus</div>
<div class="c g" style="left:2484.0px;top:229.1px;width:81.0px">Auf</div>
<div class="c g" style="left:2564.0px;top:229.1px;width:82.0px">An</div>
<div class="c" style="left:17.0px;top:262.4px;width:215.0px">Schnelllauftor</div>
<div class="c" style="left:231.0px;top:262.4px;width:175.0px">SLT 3</div>
<svg class="abs" style="left:366.5px;top:272.4px" width="14.500" height="14.500" viewBox="0 0 16 16" fill="none" stroke="#b55c5c" stroke-width="1.500" stroke-linecap="round"><circle cx="6.600" cy="6.600" r="5.400"/><path d="M10.600 10.600 15.200 15.200"/></svg>
<div class="c" style="left:405.0px;top:262.4px;width:282.0px">Schnelllauftor 3, Metzgerei</div>
<div class="c e" style="left:686.0px;top:262.4px;width:148.0px"></div>
<div class="c e" style="left:833.0px;top:262.4px;width:148.0px"></div>
<div class="c" style="left:993.0px;top:262.4px;width:148.5px">1</div>
<div class="c" style="left:1140.5px;top:262.4px;width:81.5px">EG</div>
<div class="c" style="left:1221.0px;top:262.4px;width:214.0px">Metzgerei</div>
<div class="c e" style="left:1448.0px;top:262.4px;width:81.0px"></div>
<div class="c e" style="left:1528.0px;top:262.4px;width:202.0px"></div>
<div class="c" style="left:1742.0px;top:262.4px;width:81.0px">Ja</div>
<div class="c" style="left:1822.0px;top:262.4px;width:81.0px">Matrix</div>
<div class="c" style="left:1915.5px;top:262.4px;width:135.5px">Elektro</div>
<div class="c" style="left:2050.0px;top:262.4px;width:54.0px">22</div>
<div class="c e" style="left:2116.0px;top:262.4px;width:62.0px"></div>
<div class="c" style="left:2190.0px;top:262.4px;width:61.0px">D</div>
<div class="c cc" style="left:2250.0px;top:262.4px;width:81.0px">0</div>
<div class="c" style="left:2343.5px;top:262.4px;width:61.0px"><i class="tri"></i>V</div>
<div class="c g" style="left:2403.5px;top:262.4px;width:81.5px">An</div>
<div class="c g" style="left:2484.0px;top:262.4px;width:81.0px">Auf</div>
<div class="c cc" style="left:2564.0px;top:262.4px;width:82.0px">0</div>
<div class="c" style="left:17.0px;top:295.7px;width:215.0px;height:33.8px">Schnelllauftor</div>
<div class="c" style="left:231.0px;top:295.7px;width:175.0px;height:33.8px">Kopie von SLT 3</div>
<svg class="abs" style="left:366.5px;top:305.7px" width="14.500" height="14.500" viewBox="0 0 16 16" fill="none" stroke="#b55c5c" stroke-width="1.500" stroke-linecap="round"><circle cx="6.600" cy="6.600" r="5.400"/><path d="M10.600 10.600 15.200 15.200"/></svg>
<div class="c" style="left:405.0px;top:295.7px;width:282.0px;height:33.8px">Schnelllauftor 3, Metzgerei</div>
<div class="c" style="left:686.0px;top:295.7px;width:148.0px;height:33.8px">123</div>
<div class="c e" style="left:833.0px;top:295.7px;width:148.0px;height:33.8px"></div>
<div class="c" style="left:993.0px;top:295.7px;width:148.5px;height:33.8px">1</div>
<div class="c" style="left:1140.5px;top:295.7px;width:81.5px;height:33.8px">EG</div>
<div class="c" style="left:1221.0px;top:295.7px;width:214.0px;height:33.8px">Metzgerei</div>
<div class="c e" style="left:1448.0px;top:295.7px;width:81.0px;height:33.8px"></div>
<div class="c e" style="left:1528.0px;top:295.7px;width:202.0px;height:33.8px"></div>
<div class="c" style="left:1742.0px;top:295.7px;width:81.0px;height:33.8px">Ja</div>
<div class="c" style="left:1822.0px;top:295.7px;width:81.0px;height:33.8px">Matrix</div>
<div class="c" style="left:1915.5px;top:295.7px;width:135.5px;height:33.8px">Elektro</div>
<div class="c" style="left:2050.0px;top:295.7px;width:54.0px;height:33.8px">21</div>
<div class="c e" style="left:2116.0px;top:295.7px;width:62.0px;height:33.8px"></div>
<div class="c" style="left:2190.0px;top:295.7px;width:61.0px;height:33.8px">D</div>
<div class="c cc" style="left:2250.0px;top:295.7px;width:81.0px;height:33.8px">0</div>
<div class="c" style="left:2343.5px;top:295.7px;width:61.0px;height:33.8px"><i class="tri"></i>V</div>
<div class="c g" style="left:2403.5px;top:295.7px;width:81.5px;height:33.8px">An</div>
<div class="c g" style="left:2484.0px;top:295.7px;width:81.0px;height:33.8px">Auf</div>
<div class="c cc" style="left:2564.0px;top:295.7px;width:82.0px;height:33.8px">0</div>
<div class="bar" style="top:343.2px;height:67.2px;background:#928420"></div>
<div class="c" style="left:17.0px;top:343.0px;width:215.0px">Nachströmöffnung</div>
<div class="c" style="left:231.0px;top:343.0px;width:175.0px"><i class="tri"></i>NSÖ 1.1</div>
<svg class="abs" style="left:366.5px;top:353.0px" width="14.500" height="14.500" viewBox="0 0 16 16" fill="none" stroke="#b55c5c" stroke-width="1.500" stroke-linecap="round"><circle cx="6.600" cy="6.600" r="5.400"/><path d="M10.600 10.600 15.200 15.200"/></svg>
<div class="c" style="left:405.0px;top:343.0px;width:282.0px">Nachströmung, Doppelflügeltür...</div>
<div class="c" style="left:686.0px;top:343.0px;width:148.0px"><i class="tri"></i>asd1</div>
<div class="c e" style="left:833.0px;top:343.0px;width:148.0px"></div>
<div class="c" style="left:993.0px;top:343.0px;width:148.5px">2</div>
<div class="c" style="left:1140.5px;top:343.0px;width:81.5px">EG</div>
<div class="c" style="left:1221.0px;top:343.0px;width:214.0px">Eingang</div>
<div class="c e" style="left:1448.0px;top:343.0px;width:81.0px"></div>
<div class="c e" style="left:1528.0px;top:343.0px;width:202.0px"></div>
<div class="c" style="left:1742.0px;top:343.0px;width:81.0px">Ja</div>
<div class="c" style="left:1822.0px;top:343.0px;width:81.0px">Matrix</div>
<div class="c" style="left:1915.5px;top:343.0px;width:135.5px">Bau</div>
<div class="c e" style="left:2050.0px;top:343.0px;width:54.0px"></div>
<div class="c e" style="left:2116.0px;top:343.0px;width:62.0px"></div>
<div class="c" style="left:2190.0px;top:343.0px;width:61.0px">D</div>
<div class="c g" style="left:2250.0px;top:343.0px;width:81.0px">An</div>
<div class="c" style="left:2343.5px;top:343.0px;width:61.0px">D</div>
<div class="c cc" style="left:2403.5px;top:343.0px;width:81.5px">0</div>
<div class="c g" style="left:2484.0px;top:343.0px;width:81.0px">Auf</div>
<div class="c g" style="left:2564.0px;top:343.0px;width:82.0px">Auf</div>
<div class="c" style="left:17.0px;top:376.3px;width:215.0px;height:33.8px">Nachströmöffnung</div>
<div class="c" style="left:231.0px;top:376.3px;width:175.0px;height:33.8px"><i class="tri"></i>NSÖ 1.2</div>
<svg class="abs" style="left:366.5px;top:386.3px" width="14.500" height="14.500" viewBox="0 0 16 16" fill="none" stroke="#b55c5c" stroke-width="1.500" stroke-linecap="round"><circle cx="6.600" cy="6.600" r="5.400"/><path d="M10.600 10.600 15.200 15.200"/></svg>
<div class="c" style="left:405.0px;top:376.3px;width:282.0px;height:33.8px">Nachströmung Fenster Parner...</div>
<div class="c" style="left:686.0px;top:376.3px;width:148.0px;height:33.8px">1231234</div>
<div class="c e" style="left:833.0px;top:376.3px;width:148.0px;height:33.8px"></div>
<div class="c" style="left:993.0px;top:376.3px;width:148.5px;height:33.8px">2</div>
<div class="c" style="left:1140.5px;top:376.3px;width:81.5px;height:33.8px">EG</div>
<div class="c" style="left:1221.0px;top:376.3px;width:214.0px;height:33.8px">Eingang</div>
<div class="c e" style="left:1448.0px;top:376.3px;width:81.0px;height:33.8px"></div>
<div class="c e" style="left:1528.0px;top:376.3px;width:202.0px;height:33.8px"></div>
<div class="c" style="left:1742.0px;top:376.3px;width:81.0px;height:33.8px">Ja</div>
<div class="c" style="left:1822.0px;top:376.3px;width:81.0px;height:33.8px">Matrix</div>
<div class="c" style="left:1915.5px;top:376.3px;width:135.5px;height:33.8px">Bau</div>
<div class="c e" style="left:2050.0px;top:376.3px;width:54.0px;height:33.8px"></div>
<div class="c e" style="left:2116.0px;top:376.3px;width:62.0px;height:33.8px"></div>
<div class="c e" style="left:2190.0px;top:376.3px;width:61.0px;height:33.8px"></div>
<div class="c g" style="left:2250.0px;top:376.3px;width:81.0px;height:33.8px">An</div>
<div class="c" style="left:2343.5px;top:376.3px;width:61.0px;height:33.8px">D</div>
<div class="c r" style="left:2403.5px;top:376.3px;width:81.5px;height:33.8px">Zu</div>
<div class="c g" style="left:2484.0px;top:376.3px;width:81.0px;height:33.8px">Auf</div>
<div class="c g" style="left:2564.0px;top:376.3px;width:82.0px;height:33.8px">Auf</div>
<div class="bar" style="top:418.5px;height:200.4px;background:#928420"></div>
<div class="c" style="left:17.0px;top:418.3px;width:215.0px">Ventilator Abluft</div>
<div class="c" style="left:231.0px;top:418.3px;width:175.0px"><i class="tri"></i>VEN 1</div>
<svg class="abs" style="left:366.5px;top:428.3px" width="14.500" height="14.500" viewBox="0 0 16 16" fill="none" stroke="#b55c5c" stroke-width="1.500" stroke-linecap="round"><circle cx="6.600" cy="6.600" r="5.400"/><path d="M10.600 10.600 15.200 15.200"/></svg>
<div class="c" style="left:405.0px;top:418.3px;width:282.0px">Ventilator 1 - Migros</div>
<div class="c" style="left:686.0px;top:418.3px;width:148.0px">test</div>
<div class="c e" style="left:833.0px;top:418.3px;width:148.0px"></div>
<div class="c" style="left:993.0px;top:418.3px;width:148.5px">3</div>
<div class="c" style="left:1140.5px;top:418.3px;width:81.5px">OG</div>
<div class="c" style="left:1221.0px;top:418.3px;width:214.0px">Dach</div>
<div class="c e" style="left:1448.0px;top:418.3px;width:81.0px"></div>
<div class="c e" style="left:1528.0px;top:418.3px;width:202.0px"></div>
<div class="c" style="left:1742.0px;top:418.3px;width:81.0px">Ja</div>
<div class="c" style="left:1822.0px;top:418.3px;width:81.0px">Matrix</div>
<div class="c" style="left:1915.5px;top:418.3px;width:135.5px">Bau</div>
<div class="c" style="left:2050.0px;top:418.3px;width:54.0px">10</div>
<div class="c" style="left:2116.0px;top:418.3px;width:62.0px">D</div>
<div class="c e" style="left:2190.0px;top:418.3px;width:61.0px"></div>
<div class="c r" style="left:2250.0px;top:418.3px;width:81.0px">Aus</div>
<div class="c" style="left:2343.5px;top:418.3px;width:61.0px">D</div>
<div class="c cc" style="left:2403.5px;top:418.3px;width:81.5px">0</div>
<div class="c g" style="left:2484.0px;top:418.3px;width:81.0px">Auf</div>
<div class="c g" style="left:2564.0px;top:418.3px;width:82.0px">Auf</div>
<div class="c" style="left:17.0px;top:451.6px;width:215.0px">Entrauchungsklappe</div>
<div class="c" style="left:231.0px;top:451.6px;width:175.0px"><i class="tri"></i>ERK 1</div>
<div class="c" style="left:405.0px;top:451.6px;width:282.0px"><i class="tri"></i>Entrauchungsklappe 1</div>
<div class="c" style="left:686.0px;top:451.6px;width:148.0px">test</div>
<div class="c e" style="left:833.0px;top:451.6px;width:148.0px"></div>
<div class="c" style="left:993.0px;top:451.6px;width:148.5px">3</div>
<div class="c" style="left:1140.5px;top:451.6px;width:81.5px">OG</div>
<div class="c" style="left:1221.0px;top:451.6px;width:214.0px">Dach</div>
<div class="c e" style="left:1448.0px;top:451.6px;width:81.0px"></div>
<div class="c e" style="left:1528.0px;top:451.6px;width:202.0px"></div>
<div class="c" style="left:1742.0px;top:451.6px;width:81.0px">Ja</div>
<div class="c" style="left:1822.0px;top:451.6px;width:81.0px">Matrix</div>
<div class="c" style="left:1915.5px;top:451.6px;width:135.5px">Elektro</div>
<div class="c" style="left:2050.0px;top:451.6px;width:54.0px">10</div>
<div class="c e" style="left:2116.0px;top:451.6px;width:62.0px"></div>
<div class="c" style="left:2190.0px;top:451.6px;width:61.0px">D</div>
<div class="c r" style="left:2250.0px;top:451.6px;width:81.0px">Aus</div>
<div class="c" style="left:2343.5px;top:451.6px;width:61.0px">D</div>
<div class="c cc" style="left:2403.5px;top:451.6px;width:81.5px">0</div>
<div class="c g" style="left:2484.0px;top:451.6px;width:81.0px">Auf</div>
<div class="c g" style="left:2564.0px;top:451.6px;width:82.0px">Auf</div>
<div class="c" style="left:17.0px;top:484.9px;width:215.0px">Nachströmöffnung</div>
<div class="c" style="left:231.0px;top:484.9px;width:175.0px">NSÖ 1</div>
<svg class="abs" style="left:366.5px;top:494.9px" width="14.500" height="14.500" viewBox="0 0 16 16" fill="none" stroke="#b55c5c" stroke-width="1.500" stroke-linecap="round"><circle cx="6.600" cy="6.600" r="5.400"/><path d="M10.600 10.600 15.200 15.200"/></svg>
<div class="c" style="left:405.0px;top:484.9px;width:282.0px"><i class="tri"></i>Nachströmung, Drehflügeltüre</div>
<div class="c" style="left:686.0px;top:484.9px;width:148.0px">test</div>
<div class="c e" style="left:833.0px;top:484.9px;width:148.0px"></div>
<div class="c" style="left:993.0px;top:484.9px;width:148.5px">3</div>
<div class="c" style="left:1140.5px;top:484.9px;width:81.5px">OG</div>
<div class="c" style="left:1221.0px;top:484.9px;width:214.0px">Dach</div>
<div class="c e" style="left:1448.0px;top:484.9px;width:81.0px"></div>
<div class="c e" style="left:1528.0px;top:484.9px;width:202.0px"></div>
<div class="c" style="left:1742.0px;top:484.9px;width:81.0px">Ja</div>
<div class="c" style="left:1822.0px;top:484.9px;width:81.0px">Matrix</div>
<div class="c" style="left:1915.5px;top:484.9px;width:135.5px">Lüftung</div>
<div class="c" style="left:2050.0px;top:484.9px;width:54.0px">10</div>
<div class="c" style="left:2116.0px;top:484.9px;width:62.0px">D</div>
<div class="c e" style="left:2190.0px;top:484.9px;width:61.0px"></div>
<div class="c cc" style="left:2250.0px;top:484.9px;width:81.0px">0</div>
<div class="c" style="left:2343.5px;top:484.9px;width:61.0px">D</div>
<div class="c g" style="left:2403.5px;top:484.9px;width:81.5px"><i class="tri"></i>Auf</div>
<div class="c k" style="left:2484.0px;top:484.9px;width:81.0px">X</div>
<div class="c r" style="left:2564.0px;top:484.9px;width:82.0px">Aus</div>
<div class="c" style="left:17.0px;top:518.2px;width:215.0px">Abströmöffnung</div>
<div class="c" style="left:231.0px;top:518.2px;width:175.0px">Test</div>
<svg class="abs" style="left:366.5px;top:528.2px" width="14.500" height="14.500" viewBox="0 0 16 16" fill="none" stroke="#b55c5c" stroke-width="1.500" stroke-linecap="round"><circle cx="6.600" cy="6.600" r="5.400"/><path d="M10.600 10.600 15.200 15.200"/></svg>
<div class="c e" style="left:405.0px;top:518.2px;width:282.0px"></div>
<div class="c e" style="left:686.0px;top:518.2px;width:148.0px"></div>
<div class="c e" style="left:833.0px;top:518.2px;width:148.0px"></div>
<div class="c e" style="left:993.0px;top:518.2px;width:148.5px"></div>
<div class="c e" style="left:1140.5px;top:518.2px;width:81.5px"></div>
<div class="c e" style="left:1221.0px;top:518.2px;width:214.0px"></div>
<div class="c e" style="left:1448.0px;top:518.2px;width:81.0px"></div>
<div class="c e" style="left:1528.0px;top:518.2px;width:202.0px"></div>
<div class="c" style="left:1742.0px;top:518.2px;width:81.0px">Ja</div>
<div class="c" style="left:1822.0px;top:518.2px;width:81.0px">Matrix</div>
<div class="c" style="left:1915.5px;top:518.2px;width:135.5px">Lüftung</div>
<div class="c e" style="left:2050.0px;top:518.2px;width:54.0px"></div>
<div class="c e" style="left:2116.0px;top:518.2px;width:62.0px"></div>
<div class="c e" style="left:2190.0px;top:518.2px;width:61.0px"></div>
<div class="c e" style="left:2250.0px;top:518.2px;width:81.0px"></div>
<div class="c e" style="left:2343.5px;top:518.2px;width:61.0px"></div>
<div class="c e" style="left:2403.5px;top:518.2px;width:81.5px"></div>
<div class="c e" style="left:2484.0px;top:518.2px;width:81.0px"></div>
<div class="c e" style="left:2564.0px;top:518.2px;width:82.0px"></div>
<div class="c" style="left:17.0px;top:551.5px;width:215.0px">Brandschutzklappe</div>
<div class="c" style="left:231.0px;top:551.5px;width:175.0px">neue klappe</div>
<svg class="abs" style="left:366.5px;top:561.5px" width="14.500" height="14.500" viewBox="0 0 16 16" fill="none" stroke="#b55c5c" stroke-width="1.500" stroke-linecap="round"><circle cx="6.600" cy="6.600" r="5.400"/><path d="M10.600 10.600 15.200 15.200"/></svg>
<div class="c e" style="left:405.0px;top:551.5px;width:282.0px"></div>
<div class="c" style="left:686.0px;top:551.5px;width:148.0px">wew</div>
<div class="c e" style="left:833.0px;top:551.5px;width:148.0px"></div>
<div class="c e" style="left:993.0px;top:551.5px;width:148.5px"></div>
<div class="c e" style="left:1140.5px;top:551.5px;width:81.5px"></div>
<div class="c e" style="left:1221.0px;top:551.5px;width:214.0px"></div>
<div class="c e" style="left:1448.0px;top:551.5px;width:81.0px"></div>
<div class="c e" style="left:1528.0px;top:551.5px;width:202.0px"></div>
<div class="c" style="left:1742.0px;top:551.5px;width:81.0px"></div>
<div class="c" style="left:1822.0px;top:551.5px;width:81.0px"></div>
<div class="c" style="left:1915.5px;top:551.5px;width:135.5px"></div>
<div class="c e" style="left:2050.0px;top:551.5px;width:54.0px"></div>
<div class="c e" style="left:2116.0px;top:551.5px;width:62.0px"></div>
<div class="c e" style="left:2190.0px;top:551.5px;width:61.0px"></div>
<div class="c e" style="left:2250.0px;top:551.5px;width:81.0px"></div>
<div class="c e" style="left:2343.5px;top:551.5px;width:61.0px"></div>
<div class="c e" style="left:2403.5px;top:551.5px;width:81.5px"></div>
<div class="c e" style="left:2484.0px;top:551.5px;width:81.0px"></div>
<div class="c e" style="left:2564.0px;top:551.5px;width:82.0px"></div>
<div class="c" style="left:17.0px;top:584.8px;width:215.0px;height:33.8px">Brandschutzklappe</div>
<div class="c" style="left:231.0px;top:584.8px;width:175.0px;height:33.8px">Kopie von neue k...</div>
<div class="c e" style="left:405.0px;top:584.8px;width:282.0px;height:33.8px"></div>
<div class="c" style="left:686.0px;top:584.8px;width:148.0px;height:33.8px">wew</div>
<div class="c e" style="left:833.0px;top:584.8px;width:148.0px;height:33.8px"></div>
<div class="c e" style="left:993.0px;top:584.8px;width:148.5px;height:33.8px"></div>
<div class="c e" style="left:1140.5px;top:584.8px;width:81.5px;height:33.8px"></div>
<div class="c e" style="left:1221.0px;top:584.8px;width:214.0px;height:33.8px"></div>
<div class="c e" style="left:1448.0px;top:584.8px;width:81.0px;height:33.8px"></div>
<div class="c e" style="left:1528.0px;top:584.8px;width:202.0px;height:33.8px"></div>
<div class="c" style="left:1742.0px;top:584.8px;width:81.0px;height:33.8px"></div>
<div class="c" style="left:1822.0px;top:584.8px;width:81.0px;height:33.8px"></div>
<div class="c" style="left:1915.5px;top:584.8px;width:135.5px;height:33.8px"></div>
<div class="c e" style="left:2050.0px;top:584.8px;width:54.0px;height:33.8px"></div>
<div class="c e" style="left:2116.0px;top:584.8px;width:62.0px;height:33.8px"></div>
<div class="c e" style="left:2190.0px;top:584.8px;width:61.0px;height:33.8px"></div>
<div class="c e" style="left:2250.0px;top:584.8px;width:81.0px;height:33.8px"></div>
<div class="c e" style="left:2343.5px;top:584.8px;width:61.0px;height:33.8px"></div>
<div class="c e" style="left:2403.5px;top:584.8px;width:81.5px;height:33.8px"></div>
<div class="c e" style="left:2484.0px;top:584.8px;width:81.0px;height:33.8px"></div>
<div class="c e" style="left:2564.0px;top:584.8px;width:82.0px;height:33.8px"></div>
<div class="bar" style="top:633.2px;height:67.2px;background:#928420"></div>
<div class="c" style="left:17.0px;top:633.0px;width:215.0px">Alarmübertragung ext...</div>
<div class="c" style="left:231.0px;top:633.0px;width:175.0px">sdff</div>
<div class="c" style="left:405.0px;top:633.0px;width:282.0px">sdsdsd</div>
<div class="c" style="left:686.0px;top:633.0px;width:148.0px">sd</div>
<div class="c e" style="left:833.0px;top:633.0px;width:148.0px"></div>
<div class="c e" style="left:993.0px;top:633.0px;width:148.5px"></div>
<div class="c e" style="left:1140.5px;top:633.0px;width:81.5px"></div>
<div class="c e" style="left:1221.0px;top:633.0px;width:214.0px"></div>
<div class="c e" style="left:1448.0px;top:633.0px;width:81.0px"></div>
<div class="c e" style="left:1528.0px;top:633.0px;width:202.0px"></div>
<div class="c" style="left:1742.0px;top:633.0px;width:81.0px"></div>
<div class="c" style="left:1822.0px;top:633.0px;width:81.0px"></div>
<div class="c" style="left:1915.5px;top:633.0px;width:135.5px">BMA</div>
<div class="c e" style="left:2050.0px;top:633.0px;width:54.0px"><i class="tri"></i></div>
<div class="c e" style="left:2116.0px;top:633.0px;width:62.0px"></div>
<div class="c e" style="left:2190.0px;top:633.0px;width:61.0px"></div>
<div class="c e" style="left:2250.0px;top:633.0px;width:81.0px"></div>
<div class="c e" style="left:2343.5px;top:633.0px;width:61.0px"></div>
<div class="c e" style="left:2403.5px;top:633.0px;width:81.5px"></div>
<div class="c e" style="left:2484.0px;top:633.0px;width:81.0px"></div>
<div class="c e" style="left:2564.0px;top:633.0px;width:82.0px"></div>
<div class="c" style="left:17.0px;top:666.3px;width:215.0px;height:33.8px">Abströmöffnung</div>
<div class="c" style="left:231.0px;top:666.3px;width:175.0px;height:33.8px">aaaa</div>
<div class="c e" style="left:405.0px;top:666.3px;width:282.0px;height:33.8px"></div>
<div class="c e" style="left:686.0px;top:666.3px;width:148.0px;height:33.8px"></div>
<div class="c e" style="left:833.0px;top:666.3px;width:148.0px;height:33.8px"></div>
<div class="c e" style="left:993.0px;top:666.3px;width:148.5px;height:33.8px"></div>
<div class="c e" style="left:1140.5px;top:666.3px;width:81.5px;height:33.8px"></div>
<div class="c e" style="left:1221.0px;top:666.3px;width:214.0px;height:33.8px"></div>
<div class="c e" style="left:1448.0px;top:666.3px;width:81.0px;height:33.8px"></div>
<div class="c e" style="left:1528.0px;top:666.3px;width:202.0px;height:33.8px"></div>
<div class="c" style="left:1742.0px;top:666.3px;width:81.0px;height:33.8px">Ja</div>
<div class="c" style="left:1822.0px;top:666.3px;width:81.0px;height:33.8px">Matrix</div>
<div class="c" style="left:1915.5px;top:666.3px;width:135.5px;height:33.8px">Lüftung</div>
<div class="c e" style="left:2050.0px;top:666.3px;width:54.0px;height:33.8px"></div>
<div class="c" style="left:2116.0px;top:666.3px;width:62.0px;height:33.8px">D</div>
<div class="c" style="left:2190.0px;top:666.3px;width:61.0px;height:33.8px">D</div>
<div class="c e" style="left:2250.0px;top:666.3px;width:81.0px;height:33.8px"></div>
<div class="c" style="left:2343.5px;top:666.3px;width:61.0px;height:33.8px">D</div>
<div class="c e" style="left:2403.5px;top:666.3px;width:81.5px;height:33.8px"></div>
<div class="c e" style="left:2484.0px;top:666.3px;width:81.0px;height:33.8px"></div>
<div class="c e" style="left:2564.0px;top:666.3px;width:82.0px;height:33.8px"></div>
<div class="abs" style="left:0;top:963px;width:2631px;height:14px;background:#8f8f8f;border-top:1px solid #838383"></div>
<div class="abs" style="left:1px;top:964px;width:2333px;height:12px;background:#6b6b6b;border-radius:6px"></div>
</div>
<div class="panel" style="left:14px;width:359px"><div class="ph">Elementkategorien</div><div class="li" style="top:47.0px;height:46.2px"><div class="sw" style="top:7.5px;height:29.2px;background:#492e26"></div><div class="lt" style="top:10.5px">Test</div></div><div class="li" style="top:92.2px;height:72.1px"><div class="sw" style="top:7.5px;height:55.1px;background:#468268"></div><div class="lt" style="top:10px">Mobile Abschlüsse</div><div class="ls" style="top:39.5px">Mobile Abschlüsse</div></div><div class="li" style="top:163.3px;height:72.1px"><div class="sw" style="top:7.5px;height:55.1px;background:#928420"></div><div class="lt" style="top:10px">RWA</div><div class="ls" style="top:39.5px">RWA Kategorie</div></div><div class="li" style="top:234.4px;height:46.2px"><div class="sw" style="top:7.5px;height:29.2px;background:#928420"></div><div class="lt" style="top:10.5px">Entrauchungsanlagen</div></div><div class="li" style="top:279.6px;height:46.2px"><div class="sw" style="top:7.5px;height:29.2px;background:#5f97a3"></div><div class="lt" style="top:10.5px">Sprinkleranlagen</div></div><div class="li" style="top:324.8px;height:57px"><div class="btn" style="left:41px;top:13.5px;width:241px">Elementkategorie hinzufügen</div></div></div>
<div class="panel" style="left:387px;width:358.5px"><div class="ph">Alarmgeber</div><div class="li" style="top:47.0px;height:46.2px"><div class="sw" style="top:7.5px;height:29.2px;background:#468268"></div><div class="lt" style="top:10.5px">first</div></div><div class="li" style="top:92.2px;height:72.1px"><div class="sw" style="top:7.5px;height:55.1px;background:#87241e"></div><div class="lt" style="top:10px">Handfeuermelder</div><div class="ls" style="top:39.5px">Erster Alarmgeber</div></div><div class="li" style="top:163.3px;height:72.1px"><div class="sw" style="top:7.5px;height:55.1px;background:#0c6190"></div><div class="lt" style="top:10px">zweiter Brandmelder oder ...</div><div class="ls" style="top:39.5px">Zweimeldungsabhängikgeit Typ B r</div></div><div class="li" style="top:234.4px;height:46.2px"><div class="sw" style="top:7.5px;height:29.2px;background:#5d6670"></div><div class="lt" style="top:10.5px">test</div></div><div class="li" style="top:279.6px;height:46.2px"><div class="sw" style="top:7.5px;height:29.2px;background:#5f97a3"></div><div class="lt" style="top:10.5px">Sprinkleralarmventil</div></div><div class="li" style="top:324.8px;height:57px"><div class="btn" style="left:61.5px;top:13.5px;width:198px">Alarmgeber hinzufügen</div></div></div>
<div class="panel" style="left:760.5px;width:332.5px"><div class="ph">Einzelheiten</div><svg class="abs" style="left:50%;margin-left:-42px;top:88px" width="84" height="54" viewBox="0 0 84 54" fill="none"><ellipse cx="42" cy="47" rx="42" ry="6" fill="#878787"/><path d="M11 22 24 2.500h36L73 22v23a3 3 0 0 1-3 3H14a3 3 0 0 1-3-3z" fill="#8d8d8d" stroke="#7a7a7a" stroke-width="1.300"/><path d="M11 22h19v4a3 3 0 0 0 3 3h18a3 3 0 0 0 3-3v-4h19" stroke="#7a7a7a" stroke-width="1.300"/></svg><div class="abs" style="left:0;right:0;top:156.5px;text-align:center;color:#6f6f6f;font-size:19.4px;line-height:24px">Nichts ausgewählt</div></div>
<div class="panel" style="left:1108px;width:1539px"><div class="ph">Historie</div><svg class="abs" style="left:50%;margin-left:-42px;top:88px" width="84" height="54" viewBox="0 0 84 54" fill="none"><ellipse cx="42" cy="47" rx="42" ry="6" fill="#878787"/><path d="M11 22 24 2.500h36L73 22v23a3 3 0 0 1-3 3H14a3 3 0 0 1-3-3z" fill="#8d8d8d" stroke="#7a7a7a" stroke-width="1.300"/><path d="M11 22h19v4a3 3 0 0 0 3 3h18a3 3 0 0 0 3-3v-4h19" stroke="#7a7a7a" stroke-width="1.300"/></svg><div class="abs" style="left:0;right:0;top:156.5px;text-align:center;color:#6f6f6f;font-size:19.4px;line-height:24px">Leere Historie</div></div>
<div id="modal">
<div class="abs" style="left:32px;top:21.5px;font-size:22.05px;line-height:30px;font-weight:normal;color:#262626;-webkit-text-stroke:0.3px #262626;white-space:nowrap" id="mt">Kategorie des Elements ändern</div>
<svg class="abs" style="left:1024px;top:28px" width="18" height="18" viewBox="0 0 18 18" stroke="#8c8c8c" stroke-width="1.600" stroke-linecap="round"><path d="M2 2l14 14M16 2 2 16"/></svg>
<div class="abs" style="left:0;top:72px;width:1069px;height:1px;background:#f0f0f0"></div>
<div class="abs" style="left:32px;top:107.5px;line-height:26px;font-size:19.17px;white-space:nowrap" id="mb">Elemente von einer Kategorie in eine andere verschieben.</div>
<div class="abs" style="left:32px;top:155.5px;line-height:26px;font-weight:bold;font-size:19.4px;white-space:nowrap">Quellkategorie:</div>
<div class="sel" style="top:183px"><div class="abs" style="left:15px;top:7px;width:27px;height:13px;border-radius:4px;background:#ffeb3b"></div><div class="abs" style="left:48px;top:7px;line-height:26px">RWA</div><svg class="abs" style="right:13px;top:14px" width="16" height="12" viewBox="0 0 16 12" fill="none" stroke="#bfbfbf" stroke-width="1.500" stroke-linecap="round" stroke-linejoin="round"><path d="M1.500 2 8 10l6.500-8"/></svg></div>
<div class="abs" style="left:32px;top:240px;width:1005px;height:321px">
<div class="opt" style="top:0.0px;border-radius:4px 4px 0 0;">NSÖ 1.1</div>
<div class="opt" style="top:40.0px;">NSÖ 1.2</div>
<div class="opt" style="top:80.0px;">VEN 1</div>
<div class="opt" style="top:120.0px;">ERK 1</div>
<div class="opt" style="top:160.0px;border-color:#1890ff;color:#1890ff;font-weight:bold;z-index:2">NSÖ 1<svg class="abs" style="right:14px;top:8px" width="19" height="16" viewBox="0 0 19 16" fill="none" stroke="#1890ff" stroke-width="1.700" stroke-linecap="round" stroke-linejoin="round"><path d="M1.500 8.500 7 14 17.500 1.500"/></svg></div>
<div class="opt" style="top:200.0px;">Test</div>
<div class="opt" style="top:240.0px;">neue klappe</div>
<div class="opt" style="top:280.0px;border-radius:0 0 4px 4px;">Kopie von neue klappe</div>
</div>
<div class="abs" style="left:32px;top:589px;line-height:26px;font-weight:bold;font-size:19.4px;white-space:nowrap">Zielkategorie:</div>
<div class="sel" style="top:617px"><div class="abs" style="left:15px;top:7px;width:27px;height:13px;border-radius:4px;background:#7edcb4"></div><div class="abs" style="left:48px;top:7.5px;line-height:26px;font-size:19.5px;white-space:nowrap">Mobile Abschlüsse</div><svg class="abs" style="right:13px;top:14px" width="16" height="12" viewBox="0 0 16 12" fill="none" stroke="#bfbfbf" stroke-width="1.500" stroke-linecap="round" stroke-linejoin="round"><path d="M1.500 2 8 10l6.500-8"/></svg></div>
<div class="abs" style="left:0;top:692px;width:1069px;height:1px;background:#f0f0f0"></div>
<div class="abs" style="left:919px;top:706px;width:129px;height:33px;background:#1890ff;border-radius:3px;color:#fff;text-align:center;line-height:33px;font-size:19.4px">Verschieben</div>
</div>
<svg class="abs" style="left:2320px;top:100px" width="110" height="140" viewBox="2320 100 110 140" fill="none"><path d="M2408.800 112.300 2399.500 227.500 2333 229" stroke="#c2000d" stroke-width="4"/></svg>
<div class="abs" style="left:1838px;top:192px;width:482px;height:92px;background:#fff;border:4.500px solid #c00000"></div>
<div class="abs" id="an1" style="left:1860px;top:218.6px;font-size:27.6px;line-height:36px;color:#000;white-space:nowrap;transform-origin:0 50%;transform:scaleX(0.91)">Kategorie des Elements ändern</div>
<div class="abs" style="left:54px;top:1344px;width:453px;height:86px;background:#a9a9a9"></div>
<div class="abs" style="left:63px;top:1353px;width:436px;height:69px;background:#fff"></div>
<div class="abs" id="an2" style="left:79px;top:1368px;font-size:26.2px;line-height:36px;font-weight:bold;color:#000;white-space:nowrap;transform-origin:0 50%;transform:scaleX(0.912)">Kategorie des Elements ändern</div>
</body></html>
